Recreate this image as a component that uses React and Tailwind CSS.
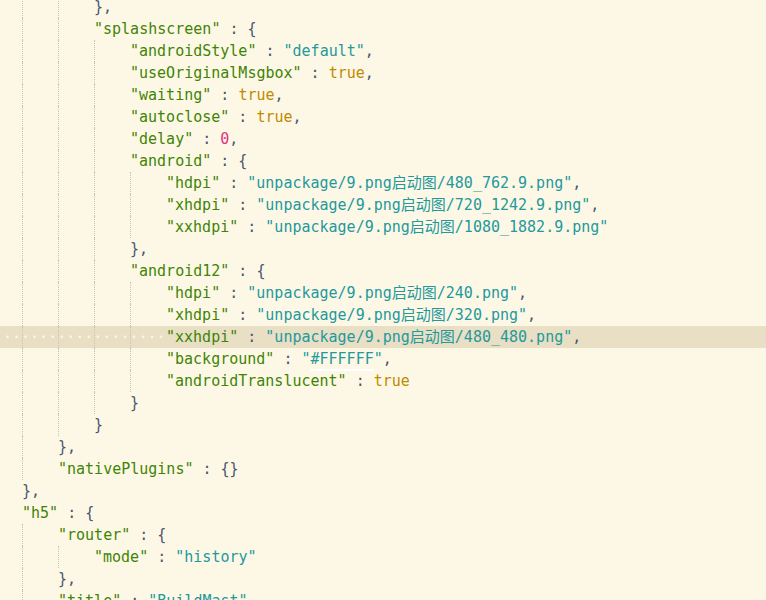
import React from "react";

const k = (t) => ({ t, c: "text-[#3f8405]" });
const p = (t) => ({ t, c: "text-[#4a5570]" });
const s = (t) => ({ t, c: "text-[#23999c]" });
const b = (t) => ({ t, c: "text-[#c08a00]" });
const n = (t) => ({ t, c: "text-[#e6307c]" });

const lines = [
  [3, [p("},")]],
  [3, [k('"splashscreen"'), p(" : {")]],
  [4, [k('"androidStyle"'), p(" : "), s('"default"'), p(",")]],
  [4, [k('"useOriginalMsgbox"'), p(" : "), b("true"), p(",")]],
  [4, [k('"waiting"'), p(" : "), b("true"), p(",")]],
  [4, [k('"autoclose"'), p(" : "), b("true"), p(",")]],
  [4, [k('"delay"'), p(" : "), n("0"), p(",")]],
  [4, [k('"android"'), p(" : {")]],
  [5, [k('"hdpi"'), p(" : "), s('"unpackage/9.png启动图/480_762.9.png"'), p(",")]],
  [5, [k('"xhdpi"'), p(" : "), s('"unpackage/9.png启动图/720_1242.9.png"'), p(",")]],
  [5, [k('"xxhdpi"'), p(" : "), s('"unpackage/9.png启动图/1080_1882.9.png"')]],
  [4, [p("},")]],
  [4, [k('"android12"'), p(" : {")]],
  [5, [k('"hdpi"'), p(" : "), s('"unpackage/9.png启动图/240.png"'), p(",")]],
  [5, [k('"xhdpi"'), p(" : "), s('"unpackage/9.png启动图/320.png"'), p(",")]],
  [5, [k('"xxhdpi"'), p(" : "), s('"unpackage/9.png启动图/480_480.png"'), p(",")], "current"],
  [5, [k('"background"'), p(" : "), s('"'), { t: "#FFFFFF", c: "text-[#23999c] underline decoration-white decoration-2 underline-offset-[5px]" }, s('"'), p(",")]],
  [5, [k('"androidTranslucent"'), p(" : "), b("true")]],
  [4, [p("}")]],
  [3, [p("}")]],
  [2, [p("},")]],
  [2, [k('"nativePlugins"'), p(" : {}")]],
  [1, [p("},")]],
  [1, [k('"h5"'), p(" : {")]],
  [2, [k('"router"'), p(" : {")]],
  [3, [k('"mode"'), p(" : "), s('"history"')]],
  [2, [p("},")]],
  [2, [k('"title"'), p(" : "), s('"BuildMast"'), p(",")]],
];

function Line({ level, tokens, current }) {
  const guides = Array.from({ length: level - 1 });
  return (
    <div
      className={`relative flex h-[22px] items-stretch whitespace-pre ${
        current ? "bg-[#e8dfc4]" : ""
      }`}
    >
      {current && (
        <span className="absolute left-[3px] top-0 leading-[22px] text-[#fff9e6]">
          {"··················"}
        </span>
      )}
      <div className="w-[22px] shrink-0" />
      {guides.map((_, i) => (
        <div
          key={i}
          className="w-[36px] shrink-0 border-l border-dotted border-[#c9c4b2]"
        />
      ))}
      <div className="leading-[22px]">
        {tokens.map((tok, i) => (
          <span key={i} className={tok.c}>
            {tok.t}
          </span>
        ))}
      </div>
    </div>
  );
}

export default function App() {
  return (
    <div className="h-[600px] w-full overflow-hidden bg-[#fdf8e6] font-['DejaVu_Sans_Mono','Noto_Sans_CJK_SC',monospace] text-[15px]">
      <div className="-mt-[4px]">
        {lines.map(([level, tokens, flag], i) => (
          <Line key={i} level={level} tokens={tokens} current={flag === "current"} />
        ))}
      </div>
    </div>
  );
}
